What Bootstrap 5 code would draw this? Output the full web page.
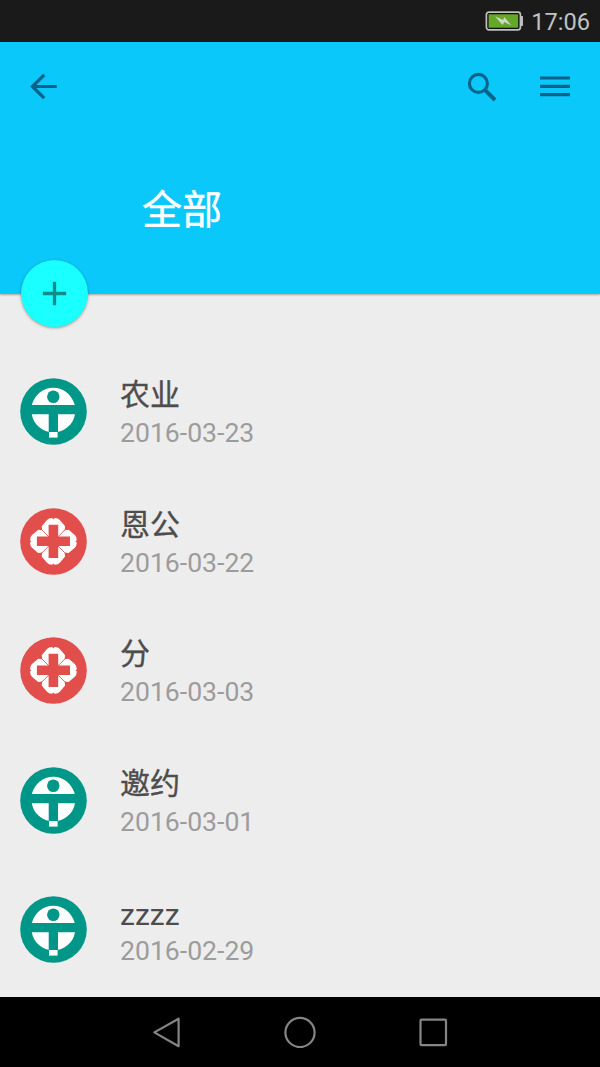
<!DOCTYPE html>
<html lang="zh-CN">
<head>
<meta charset="utf-8">
<meta name="viewport" content="width=device-width, initial-scale=1">
<title>全部</title>
<link rel="stylesheet" href="https://cdn.jsdelivr.net/npm/bootstrap@5.3.0/dist/css/bootstrap.min.css">
<style>
  body { font-family: Roboto, "Noto Sans CJK SC", sans-serif; background: #ededed; height: 1067px; line-height: 1; }
  svg { display: block; flex: none; }
  .status-bar { height: 42px; background: #1a1a1a; color: #c2c2c2; font-size: 23.6px; padding-right: 10px; gap: 8px; }
  .status-bar time { line-height: 42px; padding-top: 2px; }
  .app-header { height: 252px; background: #0ac8fa; box-shadow: 0 1px 2px rgba(0,0,0,.3); }
  .toolbar-row { height: 90px; padding: 0 29px 0 25px; color: #07628a; }
  .page-title { font-size: 40px; line-height: 48px; margin: 55px 0 0 142px; font-weight: 400; color: #fff; -webkit-text-stroke: .4px; }
  .fab { left: 20.5px; bottom: -33px; width: 67px; height: 67px; background: #1affff; box-shadow: 0 1px 3px rgba(0,0,0,.36); }
  .entries { padding-top: 52.75px; }
  .entry { height: 129.5px; padding-left: 20px; gap: 33px; }
  .entry-text { padding-top: 3.6px; }
  .entry-name { font-size: 30px; line-height: 40px; color: #4d4d4d; -webkit-text-stroke: .35px; }
  .entry-name:lang(en) { -webkit-text-stroke: 0; padding-top: 2px; margin-bottom: -2px; }
  .entry-date { font-size: 26.6px; line-height: 36px; color: #9c9c9c; }
  .system-nav { height: 70px; gap: 103px; background: #000; }
</style>
</head>
<body class="d-flex flex-column overflow-hidden">
<svg width="0" height="0" class="position-absolute" aria-hidden="true">
  <defs>
    <symbol id="logo-teal" viewBox="0 0 67 67">
      <circle cx="33.5" cy="33.5" r="33.3" fill="#009788"/>
      <path d="M11.8 27C14.8 16.5 23 9.7 33.3 9.7S51.8 16.5 54.8 27ZM11.8 36.2H55C53.3 46.5 44.5 54.2 33.4 54.2S13.5 46.5 11.8 36.2Z" fill="#fff"/>
      <path d="M28.7 35h9.3v19h-9.3z" fill="#009788"/>
      <ellipse cx="33.3" cy="18.7" rx="6.2" ry="6.3" fill="#009788"/>
      <path d="M29 54h8.6v5.6h-8.6z" fill="#fff"/>
    </symbol>
    <symbol id="logo-red" viewBox="0 0 67 67">
      <circle cx="33.5" cy="33.5" r="33.3" fill="#e24e4c"/>
      <g fill="#fff">
        <path id="petal" d="M33.4 33.4L22.2 22.2 21.7 18.2 27 12Q28.5 10.2 32.2 10L33.4 11.4 34.6 10Q38.3 10.2 39.8 12L45.1 18.2 44.6 22.2Z"/>
        <use href="#petal" transform="rotate(90 33.4 33.4)"/>
        <use href="#petal" transform="rotate(180 33.4 33.4)"/>
        <use href="#petal" transform="rotate(270 33.4 33.4)"/>
      </g>
      <path d="M21.8 21.8L45 45M45 21.8L21.8 45" stroke="#e24e4c" stroke-width=".8"/>
      <path d="M28.6 16.8h9.6v11.7h11.8v9.6H38.2v11.8h-9.6V38.1H16.9v-9.6h11.7z" fill="#e24e4c"/>
    </symbol>
  </defs>
</svg>

<div class="status-bar d-flex align-items-center justify-content-end flex-shrink-0">
  <svg width="38" height="20" viewBox="0 0 38 20">
    <rect x="1.4" y="1.2" width="34" height="17.6" rx="2.5" fill="#111" stroke="#c0c0c0" stroke-width="1.7"/>
    <path d="M35.9 5.5h1.7v9h-1.7" fill="#c0c0c0" stroke="#c0c0c0"/>
    <rect x="3.6" y="3.3" width="29.6" height="13.4" fill="#65a827"/>
    <path d="M10 5.3L18.2 9 19.2 6 26.5 14.5 19.3 11.1 17.5 14.1Z" fill="#d0d6ca"/>
  </svg>
  <time>17:06</time>
</div>

<header class="app-header position-relative flex-shrink-0">
  <div class="toolbar-row d-flex align-items-center justify-content-between">
    <svg width="36" height="36" viewBox="0 0 36 36" fill="none" stroke="currentColor" stroke-width="3.2"><path d="M31.8 17.5H8M19.2 5.8L7.4 17.5 19.2 29.2"/></svg>
    <div class="d-flex align-items-center">
      <svg width="36" height="36" viewBox="0 0 36 36" fill="none" stroke="currentColor"><circle cx="15.4" cy="14.4" r="9" stroke-width="3.1"/><path d="M22.3 21.3L32 31" stroke-width="4"/></svg>
      <svg class="ms-4" width="48" height="36" viewBox="0 0 48 36" fill="none" stroke="currentColor" stroke-width="3.2"><path d="M17 9h30M17 17.4h30M17 25.7h30"/></svg>
    </div>
  </div>
  <h1 class="page-title">全部</h1>
  <button class="fab btn position-absolute rounded-circle border-0 p-0 d-flex align-items-center justify-content-center" aria-label="添加">
    <svg width="25" height="25" viewBox="0 0 25 25" stroke="#128b8b" stroke-width="3.3"><path d="M.8 12.5h23.4M12.5.8v23.4"/></svg>
  </button>
</header>

<main class="entries flex-grow-1 overflow-hidden">
  <div class="entry d-flex align-items-center">
    <svg width="67" height="67"><use href="#logo-teal"/></svg>
    <div class="entry-text"><div class="entry-name">农业</div><div class="entry-date">2016-03-23</div></div>
  </div>
  <div class="entry d-flex align-items-center">
    <svg width="67" height="67"><use href="#logo-red"/></svg>
    <div class="entry-text"><div class="entry-name">恩公</div><div class="entry-date">2016-03-22</div></div>
  </div>
  <div class="entry d-flex align-items-center">
    <svg width="67" height="67"><use href="#logo-red"/></svg>
    <div class="entry-text"><div class="entry-name">分</div><div class="entry-date">2016-03-03</div></div>
  </div>
  <div class="entry d-flex align-items-center">
    <svg width="67" height="67"><use href="#logo-teal"/></svg>
    <div class="entry-text"><div class="entry-name">邀约</div><div class="entry-date">2016-03-01</div></div>
  </div>
  <div class="entry d-flex align-items-center">
    <svg width="67" height="67"><use href="#logo-teal"/></svg>
    <div class="entry-text"><div class="entry-name" lang="en">zzzz</div><div class="entry-date">2016-02-29</div></div>
  </div>
</main>

<nav class="system-nav d-flex align-items-center justify-content-center flex-shrink-0">
  <svg width="30" height="32" viewBox="0 0 30 32" fill="none" stroke="#858585" stroke-width="2.2" stroke-linejoin="round"><path d="M3.3 16.4L27.6 2.7V30.2Z"/></svg>
  <svg width="32" height="32" viewBox="0 0 32 32" fill="none" stroke="#858585" stroke-width="2.2"><circle cx="16" cy="16.5" r="14.6"/></svg>
  <svg width="30" height="32" viewBox="0 0 30 32" fill="none" stroke="#858585" stroke-width="2.2"><rect x="1.5" y="3.7" width="25.5" height="25.5" rx="1"/></svg>
</nav>
<script src="https://cdn.jsdelivr.net/npm/bootstrap@5.3.0/dist/js/bootstrap.bundle.min.js"></script>
</body>
</html>
